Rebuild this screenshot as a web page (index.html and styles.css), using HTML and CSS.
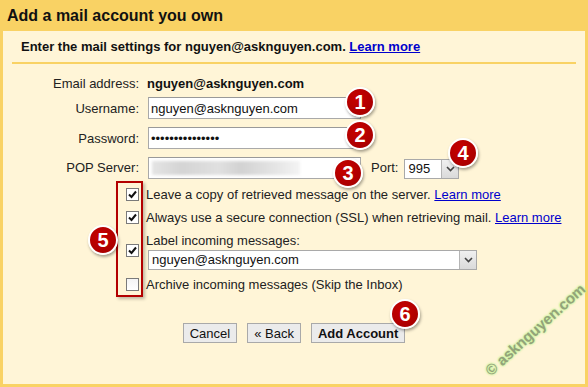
FILE: index.html
```html
<!DOCTYPE html>
<html lang="en">
  <head>
    <meta charset="UTF-8" />
    <title>Add a mail account you own</title>
    <link rel="stylesheet" href="styles.css">
  </head>
  <body>
    <div class="dialog">
      <h1 class="title">Add a mail account you own</h1>

      <div class="panel">
        <p class="intro">
          Enter the mail settings for nguyen@asknguyen.com.
          <a href="#">Learn more</a>
        </p>

        <div class="form">
          <span class="label">Email address:</span>
          <span class="value">nguyen@asknguyen.com</span>

          <label class="label" for="user">Username:</label>
          <div class="field"><input id="user" class="input" type="text" value="nguyen@asknguyen.com" /></div>

          <label class="label" for="pass">Password:</label>
          <div class="field"><input id="pass" class="input" type="password" value="askngnguyen1234" /></div>

          <label class="label" for="pop">POP Server:</label>
          <div class="field">
            <div id="pop" class="input pop-input"><span class="blur"></span></div>
            <span class="port-label">Port:</span>
            <div class="select port-select">
              <span class="select-text">995</span>
              <span class="select-btn">
                <svg width="9" height="6" viewBox="0 0 9 6"><polyline points="1,1 4.5,4.5 8,1" fill="none" stroke="#444" stroke-width="1.6"/></svg>
              </span>
            </div>
          </div>

          <span class="check-cell"><span class="box checked"></span></span>
          <div class="check-text">Leave a copy of retrieved message on the server. <a href="#">Learn more</a></div>

          <span class="check-cell"><span class="box checked"></span></span>
          <div class="check-text">Always use a secure connection (SSL) when retrieving mail. <a href="#">Learn more</a></div>

          <span class="check-cell"><span class="box checked"></span></span>
          <div class="label-group">
            <span class="check-text">Label incoming messages:</span>
            <div class="select label-select">
              <span class="select-text">nguyen@asknguyen.com</span>
              <span class="select-btn">
                <svg width="9" height="6" viewBox="0 0 9 6"><polyline points="1,1 4.5,4.5 8,1" fill="none" stroke="#444" stroke-width="1.6"/></svg>
              </span>
            </div>
          </div>

          <span class="check-cell"><span class="box"></span></span>
          <div class="check-text">Archive incoming messages (Skip the Inbox)</div>
        </div>

        <div class="buttons">
          <button class="btn">Cancel</button>
          <button class="btn">&laquo; Back</button>
          <button class="btn btn-primary">Add Account</button>
        </div>
      </div>

      <!-- annotations drawn over the screenshot -->
      <div class="highlight"></div>
      <span class="badge b1">1</span>
      <span class="badge b2">2</span>
      <span class="badge b3">3</span>
      <span class="badge b4">4</span>
      <span class="badge b5">5</span>
      <span class="badge b6">6</span>
      <span class="watermark">&copy; asknguyen.com</span>
    </div>
  </body>
</html>
```

FILE: styles.css
```css
* {
  margin: 0;
  padding: 0;
  box-sizing: border-box;
}

body {
  font-family: "Liberation Sans", Arial, sans-serif;
  font-size: 13px;
  color: #222;
  background: #f9d264;
}

.dialog {
  position: relative;
  width: 588px;
  height: 387px;
  background: #f9d264;
  overflow: hidden;
}

.title {
  height: 31px;
  padding-left: 7px;
  font-size: 16px;
  line-height: 32px;
  font-weight: 700;
  color: #111;
}

.panel {
  margin: 0 3px;
  height: 353px;
  padding: 0 9px;
  background: #fff5d7;
}

.intro {
  padding: 8px 0 7px 9px;
  line-height: 16px;
  font-weight: 700;
  border-bottom: 2px solid #f9d264;
  color: #111;
}

a {
  color: #0000cc;
}

.form {
  display: grid;
  grid-template-columns: 127px 1fr;
  grid-template-rows: 23px 26px 34px 25px 29px 17px 48px 20px;
  column-gap: 9px;
  align-items: center;
  margin-top: 8px;
}

.label {
  text-align: right;
}

.value {
  font-weight: 700;
  margin-left: -1px;
  color: #111;
}

.field {
  display: flex;
  align-items: center;
}

.input {
  width: 213px;
  height: 22px;
  padding: 0 2px;
  border: 1px solid #a9a9a9;
  border-top-color: #999;
  background: #fff;
  font-family: "Liberation Sans", Arial, sans-serif;
  font-size: 13px;
  color: #111;
  outline: none;
}

.pop-input {
  display: flex;
  align-items: center;
  padding: 0 3px;
}

.blur {
  width: 148px;
  height: 14px;
  background: linear-gradient(90deg, #e4e4e4, #d4d4d4 20%, #e0e0e0 45%, #d2d2d2 60%, #e6e6e6 85%, #f4f4f4);
  filter: blur(1.5px);
}

.port-label {
  margin: 0 6px 0 10px;
}

.select {
  display: flex;
  align-items: stretch;
  height: 20px;
  border: 1px solid #a9a9a9;
  background: #fff;
}

.select-text {
  flex: 1;
  padding-left: 3px;
  line-height: 18px;
  color: #111;
}

.select-btn {
  width: 17px;
  display: flex;
  align-items: center;
  justify-content: center;
  background: linear-gradient(#f0f0f0, #dadada);
  border-left: 1px solid #b5b5b5;
}

.port-select {
  width: 55px;
  margin-top: 2px;
}

.label-select {
  width: 329px;
}

.check-cell {
  display: flex;
  justify-content: flex-end;
}

.box {
  width: 13px;
  height: 13px;
  border: 1px solid #7a7a7a;
  background: linear-gradient(#f4f4f4, #fff);
}

.box.checked {
  background: #fff url("data:image/svg+xml,%3Csvg xmlns='http://www.w3.org/2000/svg' width='11' height='11'%3E%3Cpolyline points='2,5.5 4.5,8 9,2.5' fill='none' stroke='%23111' stroke-width='2'/%3E%3C/svg%3E") center no-repeat;
}

.check-text {
  margin-left: -2px;
  white-space: nowrap;
}

.label-group {
  display: flex;
  flex-direction: column;
  align-items: flex-start;
}

.label-group .check-text {
  line-height: 19px;
}

.buttons {
  display: flex;
  justify-content: center;
  gap: 10px;
  margin-top: 29px;
}

.btn {
  height: 20px;
  padding: 0 6px;
  border: 1px solid #a9a9a9;
  background: #ebebeb;
  font-family: "Liberation Sans", Arial, sans-serif;
  font-size: 13px;
  color: #111;
}

.btn-primary {
  font-weight: 700;
}

.highlight {
  position: absolute;
  left: 116px;
  top: 181px;
  width: 27px;
  height: 116px;
  border: 2px solid #b30000;
  box-shadow: 2px 2px 3px rgba(0, 0, 0, 0.25);
}

.badge {
  position: absolute;
  width: 30px;
  height: 30px;
  border-radius: 50%;
  background: radial-gradient(circle at 40% 35%, #c80000, #a00000);
  border: 2px solid #fff;
  box-shadow: 1px 2px 3px rgba(0, 0, 0, 0.35);
  color: #fff;
  font-size: 20px;
  font-weight: 700;
  line-height: 26px;
  text-align: center;
}

.b1 { left: 345px; top: 87px; }
.b2 { left: 345px; top: 120px; }
.b3 { left: 333px; top: 158px; }
.b4 { left: 448px; top: 138px; }
.b5 { left: 88px; top: 225px; }
.b6 { left: 390px; top: 299px; }

.watermark {
  position: absolute;
  left: 469px;
  top: 321px;
  width: 132px;
  text-align: center;
  font-size: 15px;
  font-weight: 700;
  color: #93a37a;
  text-shadow: 0 0 2px #c8f29c, 0 0 2px #c8f29c, 0 0 3px #c8f29c;
  transform: rotate(-42deg);
  white-space: nowrap;
}
```
